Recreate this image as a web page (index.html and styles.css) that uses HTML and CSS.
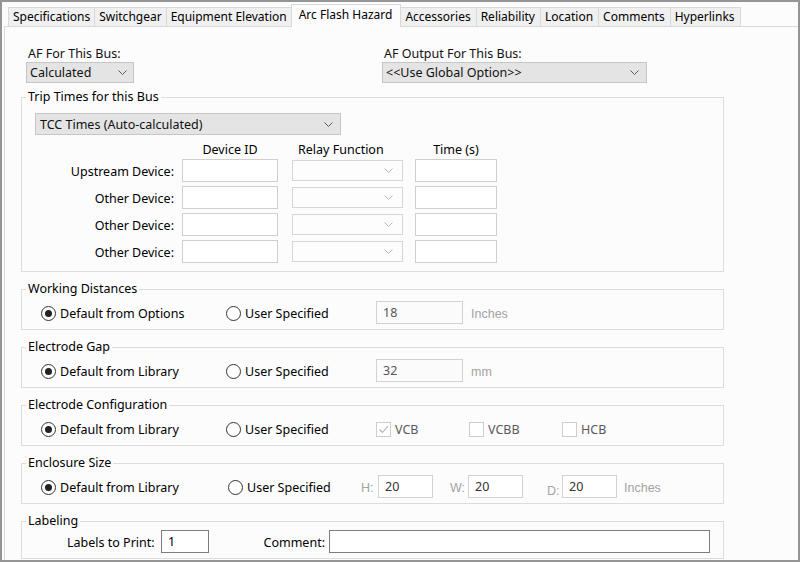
FILE: index.html
```html
<!DOCTYPE html>
<html>
<head>
<meta charset="utf-8">
<title>Arc Flash Hazard</title>
<link rel="stylesheet" href="styles.css">
</head>
<body>
<div class="window">
  <div class="tabs">
    <div class="tab">Specifications</div>
    <div class="tab">Switchgear</div>
    <div class="tab">Equipment Elevation</div>
    <div class="tab active">Arc Flash Hazard</div>
    <div class="tab">Accessories</div>
    <div class="tab">Reliability</div>
    <div class="tab">Location</div>
    <div class="tab">Comments</div>
    <div class="tab">Hyperlinks</div>
  </div>
  <div class="panel">
    <div class="top-row">
      <div class="af-col af-left">
        <div class="lbl">AF For This Bus:</div>
        <div class="combo combo-calc"><span>Calculated</span><svg class="chev" width="9" height="5" viewBox="0 0 9 5"><path d="M0.5 0.5 L4.5 4.5 L8.5 0.5" fill="none" stroke="#5a5a5a"/></svg></div>
      </div>
      <div class="af-col">
        <div class="lbl">AF Output For This Bus:</div>
        <div class="combo combo-output"><span>&lt;&lt;Use Global Option&gt;&gt;</span><svg class="chev" width="9" height="5" viewBox="0 0 9 5"><path d="M0.5 0.5 L4.5 4.5 L8.5 0.5" fill="none" stroke="#5a5a5a"/></svg></div>
      </div>
    </div>

    <fieldset class="group trip">
      <legend>Trip Times for this Bus</legend>
      <div class="combo combo-tcc"><span>TCC Times (Auto-calculated)</span><svg class="chev" width="9" height="5" viewBox="0 0 9 5"><path d="M0.5 0.5 L4.5 4.5 L8.5 0.5" fill="none" stroke="#5a5a5a"/></svg></div>
      <div class="trip-grid">
        <div></div>
        <div class="hdr hdr-dev">Device ID</div>
        <div class="hdr hdr-relay">Relay Function</div>
        <div class="hdr hdr-time">Time (s)</div>

        <div class="rlabel">Upstream Device:</div>
        <div class="field dev"></div>
        <div class="combo combo-dis"><svg class="chev" width="9" height="5" viewBox="0 0 9 5"><path d="M0.5 0.5 L4.5 4.5 L8.5 0.5" fill="none" stroke="#b8b8b8"/></svg></div>
        <div class="field time"></div>

        <div class="rlabel">Other Device:</div>
        <div class="field dev"></div>
        <div class="combo combo-dis"><svg class="chev" width="9" height="5" viewBox="0 0 9 5"><path d="M0.5 0.5 L4.5 4.5 L8.5 0.5" fill="none" stroke="#b8b8b8"/></svg></div>
        <div class="field time"></div>

        <div class="rlabel">Other Device:</div>
        <div class="field dev"></div>
        <div class="combo combo-dis"><svg class="chev" width="9" height="5" viewBox="0 0 9 5"><path d="M0.5 0.5 L4.5 4.5 L8.5 0.5" fill="none" stroke="#b8b8b8"/></svg></div>
        <div class="field time"></div>

        <div class="rlabel">Other Device:</div>
        <div class="field dev"></div>
        <div class="combo combo-dis"><svg class="chev" width="9" height="5" viewBox="0 0 9 5"><path d="M0.5 0.5 L4.5 4.5 L8.5 0.5" fill="none" stroke="#b8b8b8"/></svg></div>
        <div class="field time"></div>
      </div>
    </fieldset>

    <fieldset class="group first-opt">
      <legend>Working Distances</legend>
      <div class="opt-row">
        <div class="radio-item r1"><span class="radio on"></span><span>Default from Options</span></div>
        <div class="radio-item r2"><span class="radio"></span><span>User Specified</span></div>
        <div class="field num">18</div>
        <span class="unit">Inches</span>
      </div>
    </fieldset>

    <fieldset class="group">
      <legend>Electrode Gap</legend>
      <div class="opt-row">
        <div class="radio-item r1"><span class="radio on"></span><span>Default from Library</span></div>
        <div class="radio-item r2"><span class="radio"></span><span>User Specified</span></div>
        <div class="field num">32</div>
        <span class="unit">mm</span>
      </div>
    </fieldset>

    <fieldset class="group">
      <legend>Electrode Configuration</legend>
      <div class="opt-row">
        <div class="radio-item r1"><span class="radio on"></span><span>Default from Library</span></div>
        <div class="radio-item r2"><span class="radio"></span><span>User Specified</span></div>
        <div class="chk-item"><span class="chk"><svg width="13" height="13" viewBox="0 0 13 13"><path d="M2.5 6.5 L5.5 9.5 L11 3" fill="none" stroke="#b0b0b0" stroke-width="1.1"/></svg></span><span>VCB</span></div>
        <div class="chk-item"><span class="chk"></span><span>VCBB</span></div>
        <div class="chk-item"><span class="chk"></span><span>HCB</span></div>
      </div>
    </fieldset>

    <fieldset class="group">
      <legend>Enclosure Size</legend>
      <div class="opt-row">
        <div class="radio-item r1e"><span class="radio on"></span><span>Default from Library</span></div>
        <div class="radio-item r2e"><span class="radio"></span><span>User Specified</span></div>
        <span class="dim-lbl dim-h">H:</span>
        <div class="field dim dim-gap-h">20</div>
        <span class="dim-lbl dim-w">W:</span>
        <div class="field dim dim-gap-w">20</div>
        <span class="dim-lbl dim-d">D:</span>
        <div class="field dim">20</div>
        <span class="unit unit-enc">Inches</span>
      </div>
    </fieldset>

    <fieldset class="group labeling">
      <legend>Labeling</legend>
      <div class="opt-row">
        <span class="lbl-print">Labels to Print:</span>
        <div class="field strong print">1</div>
        <span class="lbl-comment">Comment:</span>
        <div class="field strong comment"></div>
      </div>
    </fieldset>
  </div>
</div>
</body>
</html>
```

FILE: styles.css
```css
* { box-sizing: border-box; }
html, body { margin: 0; padding: 0; }
body {
  font-family: "Noto Sans", "Open Sans", sans-serif;
  font-size: 12.5px;
  color: #111;
  background: #fff;
}
.window {
  width: 800px;
  height: 562px;
  border: 2px solid #959595;
  padding: 2px 0 0 2px;
  background: #fcfcfd;
  overflow: hidden;
  display: flex;
  flex-direction: column;
}
.tabs {
  display: flex;
  align-items: flex-end;
  height: 22px;
  padding-left: 4px;
  font-size: 12px;
  position: relative;
  z-index: 1;
  flex: none;
}
.tab {
  height: 19px;
  line-height: 17px;
  padding: 0 4px;
  background: #f0f0f0;
  border-top: 1px solid #d9d9d9;
  border-right: 1px solid #d9d9d9;
  white-space: nowrap;
  color: #000;
}
.tab:nth-child(n+5) { padding: 0 5px 0 4px; }
.tab:first-child { border-left: 1px solid #d9d9d9; }
.tab.active {
  height: 23px;
  line-height: 20px;
  margin-bottom: -1px;
  margin-left: -1px;
  padding: 0 8px 0 7px;
  background: #fcfcfd;
  border-left: 1px solid #d9d9d9;
}
.panel {
  flex: 1;
  min-height: 0;
  overflow: hidden;
  border-top: 1px solid #d9d9d9;
  border-left: 1px solid #d9d9d9;
  padding: 19px 0 0 16px;
}
.top-row {
  display: flex;
  margin-left: 5px;
}
.af-left { width: 356px; }
.lbl {
  line-height: 16px;
  padding-left: 2px;
}
.combo {
  display: flex;
  align-items: center;
  justify-content: space-between;
  height: 21px;
  border: 1px solid #c6c6c6;
  background: #e4e4e4;
  padding: 0 6px 0 3px;
  white-space: nowrap;
}
.chev { flex: none; display: block; }
.combo-calc { width: 108px; }
.combo-output { width: 265px; padding-right: 7px; }
.combo-tcc { width: 306px; height: 22px; padding-left: 4px; padding-right: 7px; }
.combo-dis {
  width: 111px;
  height: 21px;
  background: #fdfdfd;
  border-color: #d6d6d6;
  justify-content: flex-end;
  padding-right: 9px;
}

.group {
  width: 703px;
  margin: 8px 0 0 0;
  border: 1px solid #dcdcdc;
  padding: 3px 13px 5px 13px;
  min-width: 0;
}
.group legend {
  padding: 0 2px;
  margin-left: -9px;
  line-height: 18px;
  color: #000;
}
.trip { margin-top: 5px; padding: 7px 13px 6px 13px; }
.first-opt { margin-top: 8px; }

.trip-grid {
  display: grid;
  grid-template-columns: 147px 110px 123px 82px;
  grid-template-rows: 18px repeat(4, 27px);
  align-items: center;
  margin-top: 4px;
}
.hdr {
  line-height: 16px;
  padding-top: 3px;
  color: #000;
}
.hdr-dev { width: 96px; text-align: center; }
.hdr-relay { padding-left: 6px; }
.hdr-time { text-align: center; }
.rlabel {
  text-align: right;
  padding-right: 8px;
  padding-top: 1px;
  color: #000;
}
.field {
  height: 23px;
  border: 1px solid #cfcfcf;
  background: #fff;
  display: flex;
  align-items: center;
  padding-left: 6px;
  color: #444;
}
.dev { width: 96px; }
.time { width: 82px; }

.opt-row {
  display: flex;
  align-items: center;
  height: 23px;
  color: #000;
}
.radio-item {
  display: flex;
  align-items: center;
  gap: 4px;
  padding-top: 2px;
  white-space: nowrap;
}
.r1 { margin-left: 6px; width: 185px; }
.r2 { width: 150px; }
.r1e { margin-left: 6px; width: 187px; }
.r2e { width: 133px; }
.radio {
  width: 15px;
  height: 15px;
  border: 1px solid #333;
  border-radius: 50%;
  background: #fff;
  display: flex;
  align-items: center;
  justify-content: center;
  flex: none;
}
.radio.on::after {
  content: "";
  width: 7px;
  height: 7px;
  border-radius: 50%;
  background: #222;
}
.num { width: 87px; border-color: #d2d2d2; background: #fbfbfb; color: #555; }
.unit {
  margin-left: 8px;
  font-family: "Liberation Sans", Arial, sans-serif;
  font-size: 12.5px;
  color: #a3a3a3;
  padding-top: 2px;
}
.unit-enc { margin-left: 7px; }

.chk-item {
  width: 93px;
  display: flex;
  align-items: center;
  gap: 4px;
  color: #5a5a5a;
  padding-top: 1px;
}
.chk {
  width: 15px;
  height: 15px;
  border: 1px solid #cdcdcd;
  background: #fff;
  display: flex;
  align-items: center;
  justify-content: center;
  flex: none;
}
.chk svg { display: block; }

.dim-lbl {
  font-family: "Liberation Sans", Arial, sans-serif;
  font-size: 12.5px;
  color: #a3a3a3;
  padding-top: 2px;
}
.dim-h { width: 17px; }
.dim-w { width: 18px; }
.dim-d { width: 15px; padding-top: 9px; }
.dim { width: 55px; border-color: #d2d2d2; color: #333; }
.dim-gap-h { margin-right: 17px; }
.dim-gap-w { margin-right: 24px; }

.labeling { padding-top: 0; }
.lbl-print {
  margin-left: 32px;
  width: 87px;
  text-align: right;
  white-space: nowrap;
  padding-top: 2px;
}
.field.strong { border-color: #7d7d7d; color: #000; }
.print { width: 48px; margin-left: 7px; }
.lbl-comment {
  width: 120px;
  text-align: right;
  padding-right: 4px;
  padding-top: 2px;
}
.comment { width: 381px; }
```
